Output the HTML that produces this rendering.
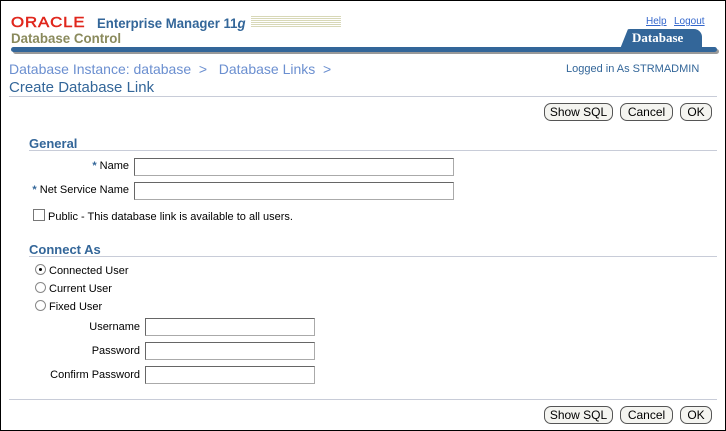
<!DOCTYPE html>
<html><head><style>
*{margin:0;padding:0;box-sizing:border-box}
body{width:726px;height:431px;background:#fff;font-family:"Liberation Sans",Arial,sans-serif;font-size:11px;color:#000;position:relative;overflow:hidden;border:1px solid #000}
.a{position:absolute;white-space:nowrap}
.inp{position:absolute;border:1px solid #aaa;border-top-color:#666;border-left-color:#666;background:#fff;height:18px}
.btn{position:absolute;height:18px;border:1px solid #555;border-radius:7px;background:#f4f4f0;font-size:12px;text-align:center;line-height:16px}
.line{position:absolute;height:1px;background:#c8ccd8}
.h{position:absolute;color:#336699;font-weight:bold;font-size:13px}
.lbl{position:absolute;text-align:right;font-size:11px}
.star{color:#336699;font-weight:bold}
.rad{position:absolute;width:11px;height:11px;border-radius:50%;border:1px solid #888;background:#fff}
</style></head><body>
<div class="a" style="left:10px;top:13px;color:#e0261c;font-size:15px;letter-spacing:0.8px;transform:scaleX(1.12);transform-origin:left;-webkit-text-stroke:0.5px #e0261c">ORACLE</div>
<div class="a" style="left:96px;top:14px;color:#336699;font-size:14px;font-weight:bold;transform:scaleX(0.94);transform-origin:left">Enterprise Manager 11<i>g</i></div>
<div class="a" style="left:250px;top:15px;width:90px;height:12px;background:repeating-linear-gradient(#d8d8b8 0 1px,#fff 1px 2px)"></div>
<div class="a" style="left:10px;top:29px;color:#8a8a5c;font-size:14px;font-weight:bold;transform:scaleX(0.95);transform-origin:left">Database Control</div>
<div class="a" style="left:645px;top:15px;font-size:10px;color:#3366cc;text-decoration:underline">Help</div>
<div class="a" style="left:673px;top:15px;font-size:10px;color:#3366cc;text-decoration:underline">Logout</div>
<div class="a" style="left:619px;top:28px;width:82px;height:20px;background:#336699;border-radius:10px 8px 0 0;clip-path:polygon(8px 0,100% 0,100% 100%,0 100%)"></div>
<div class="a" style="left:631px;top:29px;color:#fff;font-weight:bold;font-size:13px;font-family:'Liberation Serif',serif">Database</div>
<div class="a" style="left:10px;top:46px;width:706px;height:5px;background:#336699;border-radius:3px;box-shadow:2px 2px 0 #999"></div>
<div class="a" style="left:8px;top:60px;color:#6b8fd0;font-size:14px">Database Instance: database &nbsp;&gt; &nbsp;&nbsp;Database Links &nbsp;&gt;</div>
<div class="a" style="left:565px;top:62px;color:#336699;font-size:11px">Logged in As STRMADMIN</div>
<div class="a" style="left:8px;top:78px;color:#336699;font-size:15px">Create Database Link</div>
<div class="line" style="left:8px;top:95px;width:708px"></div>
<div class="btn" style="left:543px;top:102px;width:69px">Show SQL</div>
<div class="btn" style="left:619px;top:102px;width:53px">Cancel</div>
<div class="btn" style="left:679px;top:102px;width:32px">OK</div>
<div class="h" style="left:28px;top:135px">General</div>
<div class="line" style="left:28px;top:149px;width:688px"></div>
<div class="lbl" style="left:20px;top:159px;width:108px"><span class="star">*</span> Name</div>
<div class="inp" style="left:133px;top:157px;width:320px"></div>
<div class="lbl" style="left:20px;top:183px;width:108px"><span class="star">*</span> Net Service Name</div>
<div class="inp" style="left:133px;top:181px;width:320px"></div>
<div class="a" style="left:32px;top:208px;width:12px;height:12px;border:1px solid #777;background:#fff"></div>
<div class="a" style="left:47px;top:210px">Public - This database link is available to all users.</div>
<div class="h" style="left:28px;top:241px">Connect As</div>
<div class="line" style="left:28px;top:255px;width:688px"></div>
<div class="rad" style="left:34px;top:263px"><div style="position:absolute;left:3px;top:3px;width:3px;height:3px;background:#000;border-radius:50%"></div></div>
<div class="a" style="left:48px;top:264px">Connected User</div>
<div class="rad" style="left:34px;top:281px"></div>
<div class="a" style="left:48px;top:282px">Current User</div>
<div class="rad" style="left:34px;top:299px"></div>
<div class="a" style="left:48px;top:300px">Fixed User</div>
<div class="lbl" style="left:20px;top:320px;width:119px">Username</div>
<div class="inp" style="left:144px;top:317px;width:170px"></div>
<div class="lbl" style="left:20px;top:344px;width:119px">Password</div>
<div class="inp" style="left:144px;top:341px;width:170px"></div>
<div class="lbl" style="left:20px;top:368px;width:119px">Confirm Password</div>
<div class="inp" style="left:144px;top:365px;width:170px"></div>
<div class="line" style="left:8px;top:398px;width:708px"></div>
<div class="btn" style="left:543px;top:405px;width:69px">Show SQL</div>
<div class="btn" style="left:619px;top:405px;width:53px">Cancel</div>
<div class="btn" style="left:679px;top:405px;width:32px">OK</div>
</body></html>
